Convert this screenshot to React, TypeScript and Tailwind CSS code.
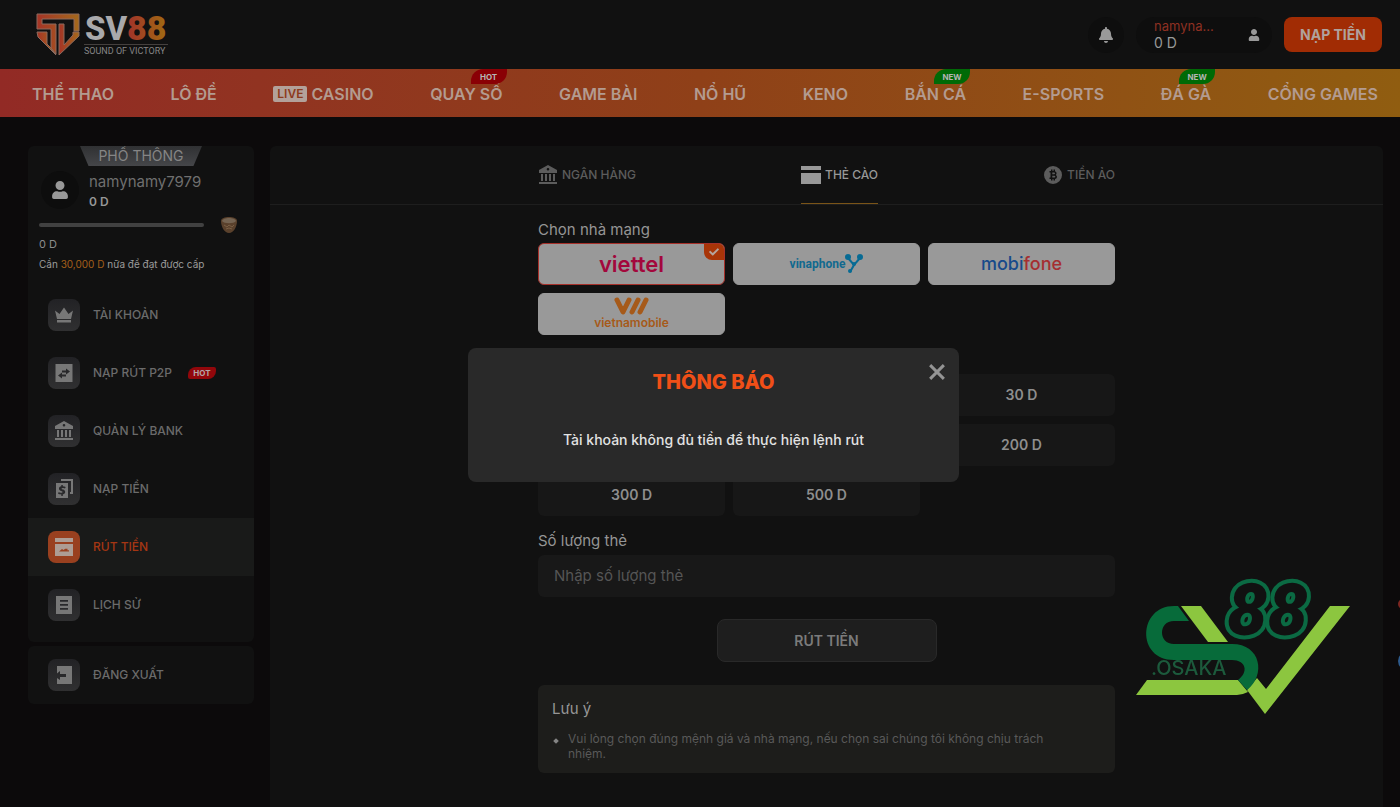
import clsx from "clsx"
import { ReactNode } from "react"
import { FaBell, FaCheck, FaUser } from "react-icons/fa"


type IconName = "crown" | "transfer" | "bank" | "deposit" | "withdraw" | "history" | "logout" | "coin" | "card"

type MenuItem = {
    label: string
    icon: IconName
    isActive?: boolean
    tag?: string
}

type NavItem = {
    label: string
    tag?: "HOT" | "NEW"
    isLive?: boolean
}

const navItems: NavItem[] = [
    { label: "THỂ THAO" },
    { label: "LÔ ĐỀ" },
    { label: "CASINO", isLive: true },
    { label: "QUAY SỐ", tag: "HOT" },
    { label: "GAME BÀI" },
    { label: "NỔ HŨ" },
    { label: "KENO" },
    { label: "BẮN CÁ", tag: "NEW" },
    { label: "E-SPORTS" },
    { label: "ĐÁ GÀ", tag: "NEW" },
    { label: "CỔNG GAMES" }
]

const menuItems: MenuItem[] = [
    { label: "TÀI KHOẢN", icon: "crown" },
    { label: "NẠP RÚT P2P", icon: "transfer", tag: "HOT" },
    { label: "QUẢN LÝ BANK", icon: "bank" },
    { label: "NẠP TIỀN", icon: "deposit" },
    { label: "RÚT TIỀN", icon: "withdraw", isActive: true },
    { label: "LỊCH SỬ", icon: "history" }
]

const amounts = ["10 D", "20 D", "30 D", "50 D", "100 D", "200 D", "300 D", "500 D"]


function Icon(props: { name: IconName, className?: string }) {
    return (
        <svg viewBox="0 0 20 20" fill="currentColor" fillRule="evenodd" className={props.className} aria-hidden="true">
            {props.name === "crown" && (
                <path d="M1 5.5 5.5 9 10 2.5 14.5 9 19 5.5 17 14H3ZM3 15h14v2.5H3Z" />
            )}
            {props.name === "transfer" && (
                <path d="M1.5 1h17v18h-17ZM12 5.5v2H8v2h4v2L16 8.500ZM8 9.500 4 12.500l4 3v-2h4v-2H8Z" />
            )}
            {props.name === "bank" && (
                <path d="M10 0 19 5v3H1V5ZM10 3a1.300 1.300 0 1 0 0 2.600A1.300 1.300 0 0 0 10 3ZM3 9h2v7H3ZM7 9h2v7H7ZM11 9h2v7h-2ZM15 9h2v7h-2ZM1 17h18v2H1Z" />
            )}
            {props.name === "deposit" && (
                <>
                    <path d="M7 0h12v15h-3v-2h1V2H7Z" />
                    <path d="M2 4h12v15H2ZM7.300 6v1.300C4.200 7.800 4.300 11.400 7 12c2.400.5 2 2-.2 1.800-1 0-1.600-.4-2-.8l-.8 1.600c.8.6 1.800.9 3.300.9V17h1.500v-1.600c3.400-.7 3-4.300.2-4.900-2.200-.5-1.800-1.700.2-1.600.7 0 1.300.2 1.800.5l.7-1.500c-.8-.4-1.700-.6-2.900-.6V6Z" />
                </>
            )}
            {props.name === "withdraw" && (
                <path d="M1 1h18v4H1ZM1 7h18v12H1ZM5 14.500h10v-1.300h-1.500v-1.400h-2.300L9.500 13 8 12Z" />
            )}
            {props.name === "history" && (
                <path d="M2 1h16v18H2ZM6 5h8v1.800H6ZM6 9h8v1.800H6ZM6 13h8v1.800H6Z" />
            )}
            {props.name === "logout" && (
                <path d="M3 1h15v18H3v-6l3 2v-3h6v-3H6V6L3 8.500Z" />
            )}
            {props.name === "coin" && (
                <path d="M10 1a9 9 0 1 0 0 18 9 9 0 0 0 0-18ZM6.500 6H8V4.500h1.500V6h1V4.500H12v1.700c1.900.6 2 2.900.8 3.700 1.800.9 1.500 3.700-.8 4.100v1.500h-1.500V14h-1v1.500H8V14H6.500v-1.500h1v-5h-1ZM9.300 7.500v1.800h1.900c1.100 0 1.100-1.800 0-1.800ZM9.300 10.700v1.800h2.200c1.100 0 1.100-1.800 0-1.800Z" />
            )}
            {props.name === "card" && (
                <path d="M0 1h20v4H0ZM0 8h20v11H0Z" />
            )}
        </svg>
    )
}

function Logo() {
    return (
        <a href="#" aria-label="SV88" className="block">
            <svg viewBox="0 0 133 44" className="w-[133px] h-11 overflow-visible">
                <defs>
                    <linearGradient id="shield" x1="0" y1="0" x2="1" y2="0">
                        <stop offset="0" stopColor="#a53426" />
                        <stop offset="1" stopColor="#a4691c" />
                    </linearGradient>
                    <linearGradient id="digits" x1="0" y1="0" x2="1" y2="0">
                        <stop offset="0" stopColor="#a1322a" />
                        <stop offset="1" stopColor="#a06a12" />
                    </linearGradient>
                </defs>
                <g fill="url(#shield)" stroke="#8c6a5e" strokeWidth="1">
                    <path d="M1 1H43V18H38V6H6V11H20V41L15 35V16H1Z" />
                    <path d="M1 19H11V31L15 35 20 42 2 24Z" />
                    <path d="M23 11H28V32L37 22V19H43V23L23 42Z" />
                </g>
                <text x="49" y="27" fontFamily="Roboto, sans-serif" fontWeight="800" fontSize="33" fill="#a9a9ab">SV</text>
                <text x="91" y="27" fontFamily="Roboto, sans-serif" fontWeight="900" fontSize="34" fill="url(#digits)">88</text>
                <path d="M48 31.500H132" stroke="#45403e" />
                <text x="48" y="41" fontFamily="Roboto, sans-serif" fontSize="9" fill="#858585">SOUND OF VICTORY</text>
            </svg>
        </a>
    )
}

function Header() {
    return (
        <header className="w-full h-[69px] flex justify-between items-center pl-9 pr-[18px] bg-[#111]">
            <Logo />
            <div className="flex items-center">
                <button aria-label="Thông báo" className="size-9 flex justify-center items-center rounded-full bg-[#0e0e0e] text-[#999]">
                    <FaBell className="size-4" />
                </button>
                <button className="w-[136px] h-9 ml-3 pl-[18px] pr-3 flex justify-between items-center rounded-full bg-[#0e0e0e] text-left">
                    <span className="flex flex-col">
                        <span className="text-[13px] leading-4 text-[#8f3022]">namyna...</span>
                        <span className="text-sm leading-[18px] text-[#999]">0 D</span>
                    </span>
                    <FaUser className="size-3 text-[#999]" />
                </button>
                <button className="w-[98px] h-[35px] ml-3 rounded-lg bg-[#a12c04] text-sm font-bold text-[#b0a29d]">
                    NẠP TIỀN
                </button>
            </div>
        </header>
    )
}

function Navigation() {
    return (
        <nav className="w-full h-12 flex justify-between items-center pl-8 pr-[22px] bg-linear-to-r from-[#922a25] via-[#8f4018] to-[#905d10]">
            {
                navItems.map((item) => {
                    return (
                        <a key={item.label} href="#" className="relative h-full flex items-center gap-1 pt-0.5 text-base font-semibold text-[#b39b90] whitespace-nowrap">
                            {item.isLive && (
                                <span className="px-1 rounded-xs bg-[#b3a19a] text-xs leading-4 font-semibold text-[#8d3a1d]">LIVE</span>
                            )}
                            {item.label}
                            {item.tag && (
                                <span className={clsx(
                                    "absolute top-0 -right-1 w-9 h-[15px] flex justify-center items-center rounded-tl-xl rounded-br-xl text-[8px] font-bold text-[#b5b5b5]",
                                    item.tag === "HOT" ? "bg-[#8a0005]" : "bg-[#006a06]"
                                )}>
                                    {item.tag}
                                </span>
                            )}
                        </a>
                    )
                })
            }
        </nav>
    )
}

function MenuLink(props: MenuItem) {
    return (
        <a href="#" className={clsx("h-[58px] flex items-center px-5", props.isActive && "bg-[#191a19]")}>
            <span className={clsx(
                "size-8 flex justify-center items-center rounded-lg",
                props.isActive ? "bg-[#99401f] text-[#ad9d94]" : "bg-linear-to-b from-[#222225] to-[#303031] text-[#777]"
            )}>
                <Icon name={props.icon} className="size-5" />
            </span>
            <span className={clsx("ml-[13px] text-xs font-medium", props.isActive ? "text-[#a53613]" : "text-[#6b6b6b]")}>
                {props.label}
            </span>
            {props.tag && (
                <span className="w-7 h-3 ml-4 flex justify-center items-center rounded-tl-lg rounded-br-lg rounded-tr-xs rounded-bl-xs bg-[#92070b] text-[8px] font-bold text-[#b5a5a5]">
                    {props.tag}
                </span>
            )}
        </a>
    )
}

function Profile() {
    return (
        <div className="h-[140px] flex flex-col">
            <div className="w-[122px] h-5 ml-[52px] flex justify-center items-center bg-linear-to-b from-[#303133] to-[#454649] text-sm text-[#858585] [clip-path:polygon(0_0,100%_0,93%_100%,7%_100%)]">
                PHỔ THÔNG
            </div>
            <div className="flex items-center gap-2.5 mt-1 pl-[13px]">
                <span className="size-[38px] flex justify-center items-center rounded-full bg-[#0d0d0d] text-[#989898]">
                    <FaUser className="size-[18px]" />
                </span>
                <span className="flex flex-col">
                    <span className="text-[15px] leading-6 text-[#6f6f6f]">namynamy7979</span>
                    <span className="text-xs leading-4 font-semibold text-[#979797]">0 D</span>
                </span>
            </div>
            <div className="flex items-center justify-between mt-1.5 pl-[11px] pr-4">
                <div className="w-[165px] h-1 rounded-full bg-[#414141]" />
                <svg viewBox="0 0 18 18" className="size-[18px]" aria-hidden="true">
                    <path d="M1 5C1 2 5 1 9 1s8 1 8 4c0 5-3 12-8 12S1 10 1 5Z" fill="#5a412c" />
                    <path d="M2 5c1-4 13-4 14 0-2 3-12 3-14 0Z" fill="#756452" />
                    <path d="m4 9 3 2 2-2 3 2 2-2M6 13l3-1 3 1" stroke="#7a5f45" fill="none" />
                </svg>
            </div>
            <span className="pl-[11px] mt-0.5 text-[11px] leading-4 text-[#8c8c8c]">0 D</span>
            <span className="pl-[11px] mt-1 text-[10px] leading-4 text-[#9c9c9c]">
                Cần <span className="text-[#a55f1a]">30,000 D</span> nữa để đạt được cấp
            </span>
        </div>
    )
}

function Sidebar() {
    return (
        <aside className="w-[226px] shrink-0 flex flex-col gap-1">
            <div className="pb-2 rounded-md bg-[#111]">
                <Profile />
                {menuItems.map((item) => <MenuLink key={item.label} {...item} />)}
            </div>
            <div className="rounded-md bg-[#111]">
                <MenuLink label="ĐĂNG XUẤT" icon="logout" />
            </div>
        </aside>
    )
}

function Tab(props: { label: string, icon: IconName, isActive?: boolean }) {
    return (
        <button className={clsx(
            "h-full flex items-center gap-1 border-b text-xs font-medium",
            props.isActive ? "border-[#7a5418] text-[#989898]" : "border-transparent text-[#5c5c5c]"
        )}>
            <Icon name={props.icon} className="size-5" />
            {props.label}
        </button>
    )
}

function Carrier(props: { label: string, isSelected?: boolean, children: ReactNode }) {
    return (
        <button type="button" aria-label={props.label} className={clsx(
            "relative h-[42px] flex justify-center items-center rounded-md border bg-[#999] overflow-hidden",
            props.isSelected ? "border-[#a6302a]" : "border-[#999]"
        )}>
            {props.children}
            {props.isSelected && (
                <span className="absolute top-0 right-0 w-5 h-4 flex justify-center items-center rounded-bl-lg bg-[#a83508] text-[#b5a59e]">
                    <FaCheck className="size-2.5" />
                </span>
            )}
        </button>
    )
}

function Carriers() {
    return (
        <div className="grid grid-cols-3 gap-2">
            <Carrier label="Viettel" isSelected>
                <span className="text-[22px] leading-6 font-semibold text-[#a3073c]">viettel</span>
            </Carrier>
            <Carrier label="Vinaphone">
                <span className="flex items-center text-xs font-bold text-[#11698f] font-['Roboto',sans-serif]">
                    vinaphone
                    <svg viewBox="0 0 18 20" className="w-[18px] h-5 stroke-[#076b94] fill-[#076b94] stroke-2">
                        <path d="m3 4 6 7 6-7M9 11l-4 7" fill="none" />
                        <circle cx="3" cy="3" r="2" />
                        <circle cx="15" cy="3" r="2" />
                        <circle cx="9" cy="10" r="1" />
                        <circle cx="5" cy="17" r="1" />
                    </svg>
                </span>
            </Carrier>
            <Carrier label="Mobifone">
                <span className="text-lg font-medium text-[#174a8a]">mobi<span className="text-[#a52f31]">fone</span></span>
            </Carrier>
            <Carrier label="Vietnamobile">
                <span className="flex flex-col items-center text-[#a65a1a]">
                    <svg viewBox="0 0 36 18" className="w-9 h-[18px] fill-none stroke-[#a65a1a] stroke-[5]" strokeLinecap="round" strokeLinejoin="round">
                        <path d="m4 3 6 12 6-12M25 3l-6 12M33 3l-6 12" />
                    </svg>
                    <span className="text-xs leading-4 font-semibold">vietnamobile</span>
                </span>
            </Carrier>
        </div>
    )
}

function WithdrawForm() {
    return (
        <form className="w-[577px] max-w-full mx-auto pt-[15px] flex flex-col">
            <span className="mb-[3px] text-[15px] leading-5 text-[#959595]">Chọn nhà mạng</span>
            <Carriers />
            <span className="mt-4 mb-[3px] text-[15px] leading-5 text-[#959595]">Chọn mệnh giá</span>
            <div className="grid grid-cols-3 gap-2">
                {
                    amounts.map((amount) => {
                        return (
                            <button key={amount} type="button" className="h-[42px] rounded-md bg-[#171717] text-sm font-semibold text-[#8e8e8e]">
                                {amount}
                            </button>
                        )
                    })
                }
            </div>
            <label htmlFor="quantity" className="mt-[15px] mb-1 text-[15px] leading-5 text-[#959595]">Số lượng thẻ</label>
            <input
                id="quantity"
                placeholder="Nhập số lượng thẻ"
                className="h-[42px] px-4 pb-0.5 rounded-md bg-[#181818] text-[15px] text-[#959595] placeholder:text-[#555] outline-none"
            />
            <button type="button" className="w-[220px] h-[43px] mt-[22px] mx-auto rounded-lg border border-[#292929] bg-[#1e1e1e] text-sm font-semibold text-[#7b7b7b]">
                RÚT TIỀN
            </button>
            <div className="mt-[23px] px-3.5 pt-3.5 pb-3 rounded-md bg-[#1d1d1b]">
                <h3 className="text-[15px] leading-5 text-[#969696]">Lưu ý</h3>
                <ul className="mt-3 text-xs leading-[15px] text-[#595959]">
                    <li className="flex gap-2.5 pr-9">
                        <span className="size-1 mt-2 ml-0.5 shrink-0 rotate-45 bg-[#858585]" />
                        Vui lòng chọn đúng mệnh giá và nhà mạng, nếu chọn sai chúng tôi không chịu trách nhiệm.
                    </li>
                </ul>
            </div>
        </form>
    )
}

function Content() {
    return (
        <main className="grow min-h-[661px] rounded-t-md bg-[#111]">
            <div className="border-b border-[#1e1e1e]">
                <div className="w-[577px] max-w-full h-[58px] mx-auto flex justify-between items-center">
                    <Tab label="NGÂN HÀNG" icon="bank" />
                    <Tab label="THẺ CÀO" icon="card" isActive />
                    <Tab label="TIỀN ẢO" icon="coin" />
                </div>
            </div>
            <WithdrawForm />
        </main>
    )
}

function Notice() {
    return (
        <div className="fixed inset-0 flex justify-center items-center pl-[27px] pt-[22px]">
            <div role="dialog" aria-labelledby="notice-title" className="relative w-[491px] h-[134px] pt-[22px] flex flex-col items-center rounded-lg bg-[#292929]">
                <h2 id="notice-title" className="text-xl leading-6 font-extrabold text-[#f04f17]">THÔNG BÁO</h2>
                <p className="mt-9 text-sm leading-5 font-medium text-[#e2e2e2]">Tài khoản không đủ tiền để thực hiện lệnh rút</p>
                <button aria-label="Đóng" className="absolute top-3.5 right-3 p-0.5 text-[#949494]">
                    <svg viewBox="0 0 14 14" className="size-4 fill-none stroke-current stroke-[2.6]">
                        <path d="m1 1 12 12M13 1 1 13" />
                    </svg>
                </button>
            </div>
        </div>
    )
}

function Badge() {
    return (
        <div className="fixed right-[50px] bottom-[92px] pointer-events-none">
            <svg viewBox="0 0 216 140" className="w-[216px] h-[140px] overflow-visible">
                <path d="M47 31H67L94 67H74Z" fill="#8cc63f" />
                <path d="M196 31H216L131 139 113 115 123 103 132 114Z" fill="#8cc63f" />
                <path d="M13 105H104L114 117Q108 120 103 120H2Z" fill="#8cc63f" />
                <path d="M44 31H40C4 31 2 85 40 85H98C112 85 115 97 104 105L113 115C132 100 127 69 98 69H40C24 69 24 46 40 46H55Z" fill="#076b3a" />
                <text x="17" y="100" fontFamily="Inter, sans-serif" fontSize="20" fontWeight="500" fill="#1c5a3c">.OSAKA</text>
                <text
                    x="93"
                    y="60"
                    fontFamily="Roboto, sans-serif"
                    fontSize="72"
                    fontWeight="900"
                    fontStyle="italic"
                    fill="#111"
                    stroke="#0b6a43"
                    strokeWidth="8"
                    strokeLinejoin="round"
                    paintOrder="stroke"
                >
                    88
                </text>
            </svg>
        </div>
    )
}

export default function App() {
    return (
        <div className="relative min-h-screen flex flex-col bg-[#0c0a0b] font-['Inter',sans-serif] overflow-hidden">
            <Header />
            <Navigation />
            <div className="flex gap-4 pt-[29px] pl-7 pr-[17px]">
                <Sidebar />
                <Content />
            </div>
            <Badge />
            <span className="fixed top-[599px] -right-2 size-2.5 rounded-full bg-[#7d2620]" />
            <span className="fixed top-[651px] -right-[18px] size-5 rounded-full bg-[#2d5a8c]" />
            <Notice />
        </div>
    )
}
